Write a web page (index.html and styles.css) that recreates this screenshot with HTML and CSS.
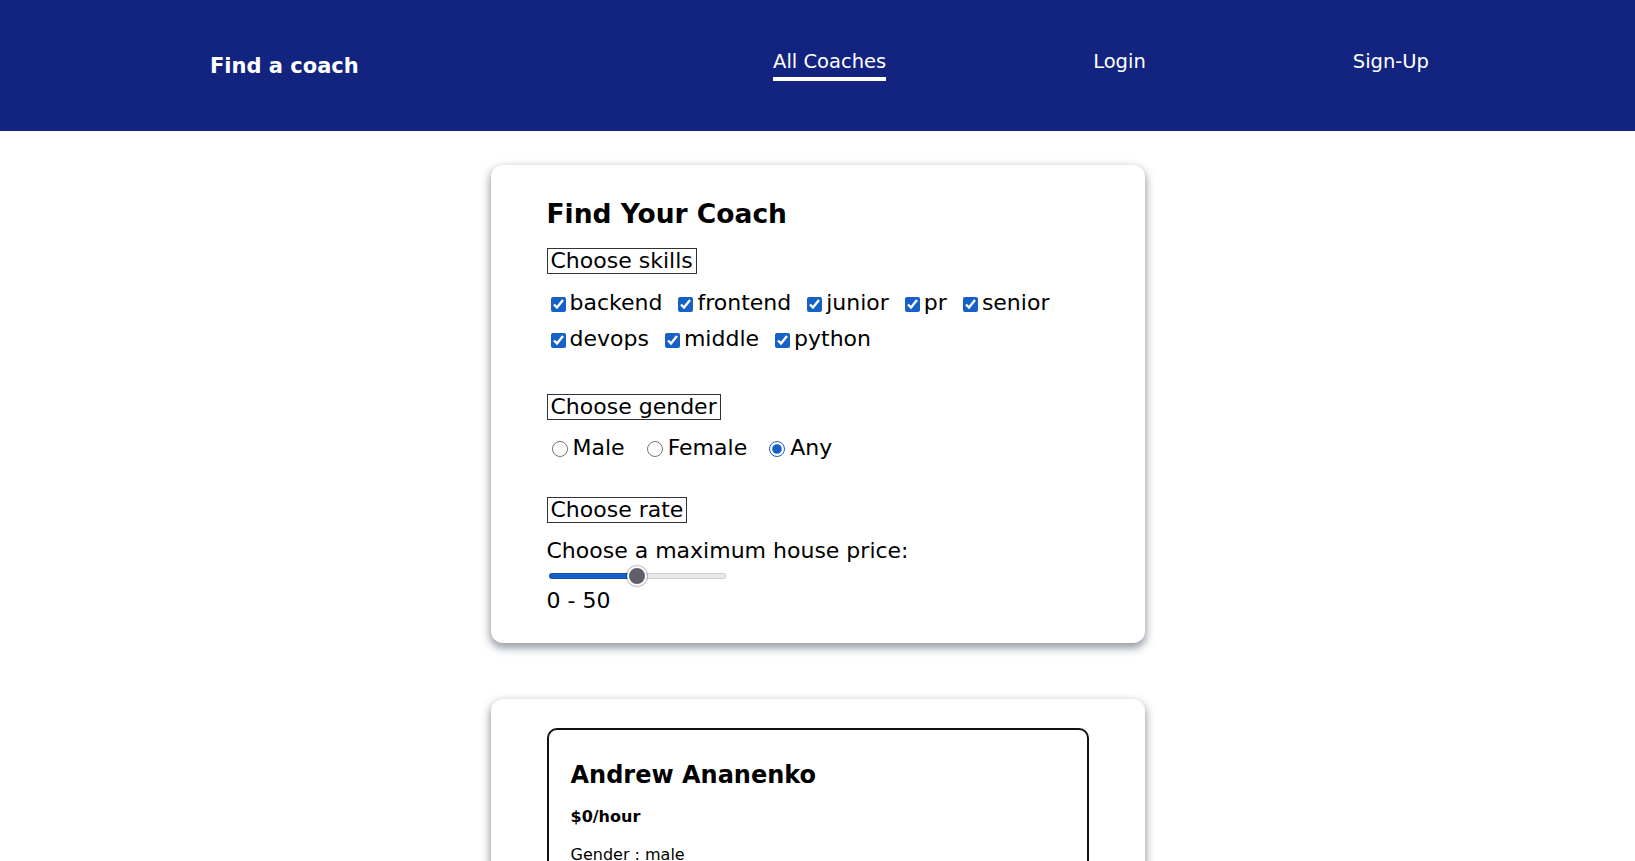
FILE: index.html
```html
<!DOCTYPE html>
<html lang="en">
<head>
<meta charset="utf-8">
<title>Find a coach</title>
<link rel="stylesheet" href="styles.css">
</head>
<body>
<header class="top">
  <h1 class="logo">Find a coach</h1>
  <nav>
    <ul class="nav-list">
      <li><a class="nav-link active" href="#">All Coaches</a></li>
      <li><a class="nav-link" href="#">Login</a></li>
      <li><a class="nav-link" href="#">Sign-Up</a></li>
    </ul>
  </nav>
</header>
<main>
  <section class="card filter">
    <h2 class="filter-title">Find Your Coach</h2>
    <span class="legend">Choose skills</span>
    <div class="options skills">
      <label class="opt"><input type="checkbox" class="check" checked>backend</label>
      <label class="opt"><input type="checkbox" class="check" checked>frontend</label>
      <label class="opt"><input type="checkbox" class="check" checked>junior</label>
      <label class="opt"><input type="checkbox" class="check" checked>pr</label>
      <label class="opt"><input type="checkbox" class="check" checked>senior</label>
      <label class="opt"><input type="checkbox" class="check" checked>devops</label>
      <label class="opt"><input type="checkbox" class="check" checked>middle</label>
      <label class="opt"><input type="checkbox" class="check" checked>python</label>
    </div>
    <span class="legend legend-gender">Choose gender</span>
    <div class="options radios">
      <label class="ropt"><input type="radio" class="radio" name="g">Male</label>
      <label class="ropt"><input type="radio" class="radio" name="g">Female</label>
      <label class="ropt"><input type="radio" class="radio" name="g" checked>Any</label>
    </div>
    <span class="legend legend-rate">Choose rate</span>
    <p class="range-label">Choose a maximum house price:</p>
    <input type="range" class="range" min="0" max="100" value="50">
    <p class="range-value">0 - 50</p>
  </section>
  <section class="card list">
    <article class="coach">
      <h3 class="coach-name">Andrew Ananenko</h3>
      <h4 class="coach-rate">$0/hour</h4>
      <p class="coach-info">Gender : male</p>
      <div class="badges">
        <span class="badge">backend</span>
        <span class="badge">python</span>
        <span class="badge">senior</span>
      </div>
      <div class="actions">
        <a class="btn btn-outline" href="#">Contact</a>
        <a class="btn" href="#">View Details</a>
      </div>
    </article>
  </section>
</main>
</body>
</html>
```
FILE: styles.css
```css
html {
  scrollbar-width: none;
}
* {
  box-sizing: border-box;
}
body {
  margin: 0;
  font-family: "DejaVu Sans", "Liberation Sans", sans-serif;
  color: #000;
  background: #fff;
}
.top {
  height: 131px;
  background: #132380;
  display: flex;
  align-items: center;
  justify-content: space-between;
  padding: 0 206px 0 210px;
}
.logo {
  margin: 2px 0 0;
  font-size: 21px;
  line-height: 25px;
  font-weight: 700;
  color: #fff;
}
.nav-list {
  display: flex;
  gap: 207px;
  list-style: none;
  margin: 0;
  padding: 0;
}
.nav-link {
  display: block;
  color: #fff;
  text-decoration: none;
  font-size: 19.5px;
  line-height: 23px;
  padding-bottom: 4px;
  border-bottom: 4px solid transparent;
}
.nav-link.active {
  border-bottom-color: #fff;
}
.card {
  width: 40%;
  margin: 0 auto;
  background: #fff;
  border-radius: 12px;
  box-shadow: 0 4px 9px 1px rgba(40, 55, 72, 0.5);
}
.filter {
  margin-top: 34px;
  padding: 33px 56px 29px;
}
.filter-title {
  margin: 0 0 18px;
  font-size: 26.5px;
  line-height: 32px;
  font-weight: 700;
}
.legend {
  display: block;
  width: fit-content;
  border: 1px solid #333;
  padding: 0 3px;
  font-size: 22px;
  line-height: 24px;
}
.options {
  display: flex;
  flex-wrap: wrap;
  font-size: 22px;
  line-height: 36px;
}
.skills {
  margin-top: 11px;
}
.opt {
  margin-right: 12px;
}
.check {
  width: 15px;
  height: 15px;
  margin: 0 4px 0 4px;
  vertical-align: middle;
  accent-color: #1760c8;
}
.legend-gender {
  margin-top: 37px;
}
.radios {
  margin-top: 10px;
}
.ropt {
  margin-right: 17px;
}
.radio {
  width: 16px;
  height: 16px;
  margin: 0 5px 0 5px;
  vertical-align: middle;
  accent-color: #1760c8;
}
.legend-rate {
  margin-top: 31px;
}
.range-label {
  margin: 15px 0 0;
  font-size: 22px;
  line-height: 26px;
}
.range {
  -webkit-appearance: none;
  appearance: none;
  display: block;
  width: 177px;
  height: 6px;
  margin: 9px 0 9px 2px;
  border-radius: 3px;
  background: linear-gradient(to right, #1760c8 50%, #e9e9ec 50%);
  box-shadow: inset 0 0 0 1px rgba(0, 0, 0, 0.12);
  outline: none;
}
.range::-webkit-slider-thumb {
  -webkit-appearance: none;
  appearance: none;
  width: 20px;
  height: 20px;
  border-radius: 50%;
  background: #5f5f6e;
  border: 2px solid #fff;
  box-shadow: 0 0 1px 1px rgba(0, 0, 0, 0.25);
}
.range-value {
  margin: 0;
  font-size: 22px;
  line-height: 26px;
}
.list {
  margin-top: 56px;
  margin-bottom: 40px;
  padding: 29px 56px;
}
.coach {
  border: 2px solid #111;
  border-radius: 10px;
  padding: 31px 22px 24px;
}
.coach-name {
  margin: 0;
  font-size: 24px;
  line-height: 28px;
  font-weight: 700;
}
.coach-rate {
  margin: 18px 0 0;
  font-size: 16px;
  line-height: 20px;
  font-weight: 700;
}
.coach-info {
  margin: 18px 0 0;
  font-size: 16px;
  line-height: 20px;
}
.badges {
  display: flex;
  gap: 8px;
  margin-top: 18px;
}
.badge {
  background: #132380;
  color: #fff;
  border-radius: 30px;
  padding: 4px 16px;
  font-size: 14px;
}
.actions {
  display: flex;
  justify-content: flex-end;
  gap: 10px;
  margin-top: 18px;
}
.btn {
  background: #132380;
  color: #fff;
  text-decoration: none;
  border: 1px solid #132380;
  border-radius: 30px;
  padding: 8px 24px;
  font-size: 16px;
}
.btn-outline {
  background: transparent;
  color: #132380;
}
```
